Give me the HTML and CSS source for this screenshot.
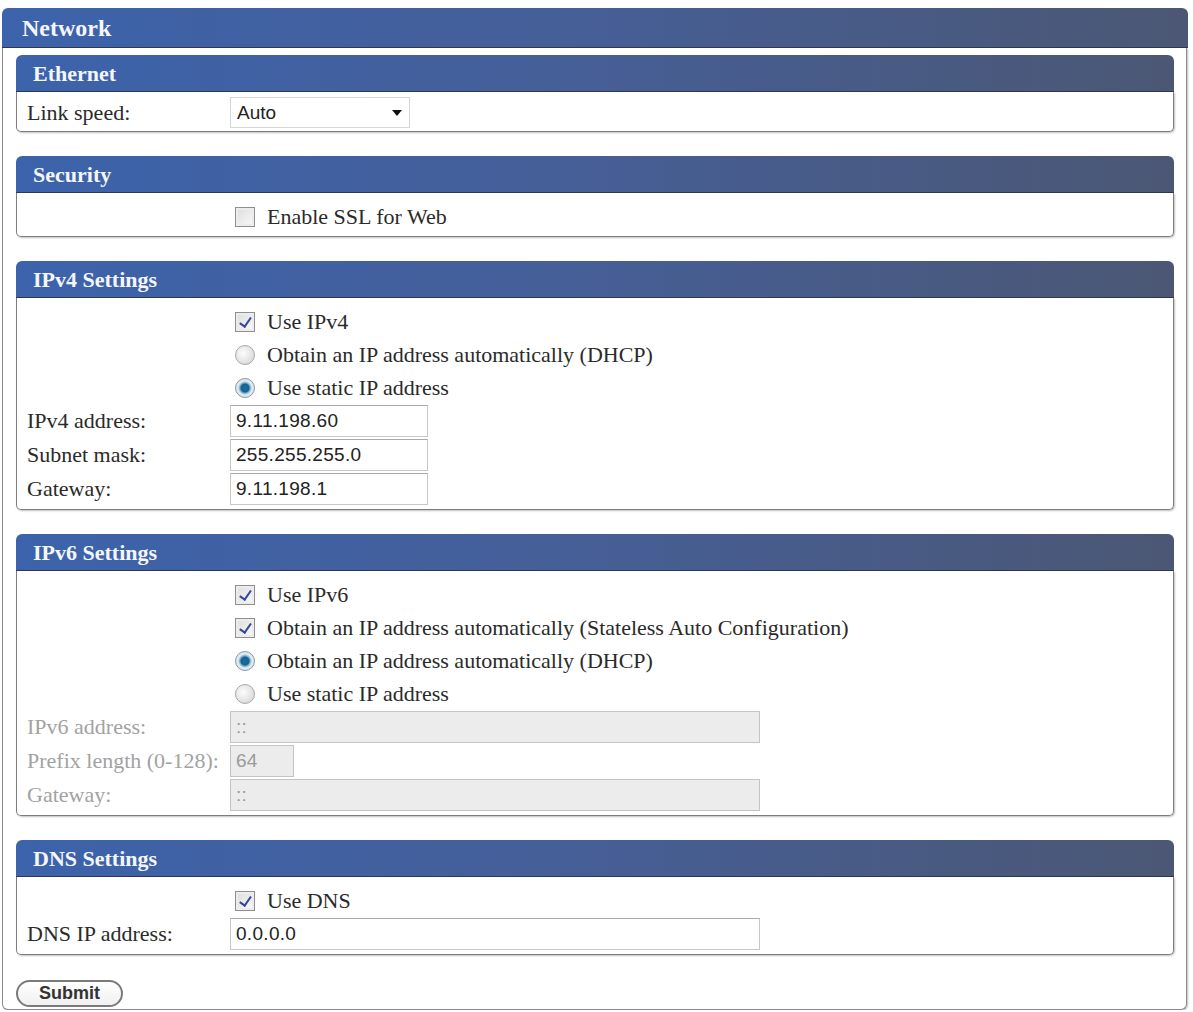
FILE: index.html
```html
<!DOCTYPE html>
<html lang="en">
<head>
    <meta charset="UTF-8">
    <title>Network</title>
    <link rel="stylesheet" href="styles.css">
</head>
<body>
    <div class="panel">
        <div class="panel-title">Network</div>
        <form class="panel-body" onsubmit="return false;">

            <div class="section">
                <div class="section-title">Ethernet</div>
                <div class="section-body compact">
                    <div class="row">
                        <label class="label">Link speed:</label>
                        <span class="select-wrap">
                            <select class="select">
                                <option>Auto</option>
                                <option>10 Mbps</option>
                                <option>100 Mbps</option>
                                <option>1 Gbps</option>
                            </select>
                        </span>
                    </div>
                </div>
            </div>

            <div class="section">
                <div class="section-title">Security</div>
                <div class="section-body">
                    <div class="row">
                        <span class="label"></span>
                        <label class="option"><input type="checkbox" class="check"> Enable SSL for Web</label>
                    </div>
                </div>
            </div>

            <div class="section">
                <div class="section-title">IPv4 Settings</div>
                <div class="section-body">
                    <div class="row">
                        <span class="label"></span>
                        <label class="option"><input type="checkbox" class="check" checked> Use IPv4</label>
                    </div>
                    <div class="row">
                        <span class="label"></span>
                        <label class="option"><input type="radio" name="v4" class="radio"> Obtain an IP address automatically (DHCP)</label>
                    </div>
                    <div class="row">
                        <span class="label"></span>
                        <label class="option"><input type="radio" name="v4" class="radio" checked> Use static IP address</label>
                    </div>
                    <div class="row field">
                        <label class="label">IPv4 address:</label>
                        <input type="text" class="text short" value="9.11.198.60">
                    </div>
                    <div class="row field">
                        <label class="label">Subnet mask:</label>
                        <input type="text" class="text short" value="255.255.255.0">
                    </div>
                    <div class="row field">
                        <label class="label">Gateway:</label>
                        <input type="text" class="text short" value="9.11.198.1">
                    </div>
                </div>
            </div>

            <div class="section">
                <div class="section-title">IPv6 Settings</div>
                <div class="section-body">
                    <div class="row">
                        <span class="label"></span>
                        <label class="option"><input type="checkbox" class="check" checked> Use IPv6</label>
                    </div>
                    <div class="row">
                        <span class="label"></span>
                        <label class="option"><input type="checkbox" class="check" checked> Obtain an IP address automatically (Stateless Auto Configuration)</label>
                    </div>
                    <div class="row">
                        <span class="label"></span>
                        <label class="option"><input type="radio" name="v6" class="radio" checked> Obtain an IP address automatically (DHCP)</label>
                    </div>
                    <div class="row">
                        <span class="label"></span>
                        <label class="option"><input type="radio" name="v6" class="radio"> Use static IP address</label>
                    </div>
                    <div class="row field disabled">
                        <label class="label">IPv6 address:</label>
                        <input type="text" class="text long" value="::" disabled>
                    </div>
                    <div class="row field disabled">
                        <label class="label">Prefix length (0-128):</label>
                        <input type="text" class="text tiny" value="64" disabled>
                    </div>
                    <div class="row field disabled">
                        <label class="label">Gateway:</label>
                        <input type="text" class="text long" value="::" disabled>
                    </div>
                </div>
            </div>

            <div class="section">
                <div class="section-title">DNS Settings</div>
                <div class="section-body">
                    <div class="row">
                        <span class="label"></span>
                        <label class="option"><input type="checkbox" class="check" checked> Use DNS</label>
                    </div>
                    <div class="row field">
                        <label class="label">DNS IP address:</label>
                        <input type="text" class="text long" value="0.0.0.0">
                    </div>
                </div>
            </div>

            <button type="submit" class="submit">Submit</button>
        </form>
    </div>
</body>
</html>
```

FILE: styles.css
```css
body {
    margin: 0;
    padding: 8px 5px 0 2px;
    background: #ffffff;
    font-family: "Liberation Serif", "Times New Roman", serif;
    font-size: 22px;
    color: #2a2a2a;
}
.panel-title,
.section-title {
    background: linear-gradient(to right, #3c63ab 0%, #455f99 45%, #4b5774 100%);
    color: #f4f6fb;
    font-weight: bold;
    border-radius: 6px 6px 0 0;
    border-bottom: 1px solid #2e3850;
}
.panel-title {
    font-size: 24px;
    height: 39px;
    line-height: 40px;
    padding-left: 20px;
}
.panel-body {
    margin: 0 1px 0 0;
    border: 1px solid #8a8a8a;
    border-top: none;
    border-radius: 0 0 6px 6px;
    box-shadow: 1px 1px 2px rgba(0,0,0,0.25);
    padding: 7px 12px 5px 13px;
    height: 962px;
    box-sizing: border-box;
}
.section {
    margin-bottom: 24px;
}
.section-title {
    font-size: 22px;
    height: 36px;
    line-height: 38px;
    padding-left: 17px;
}
.section-body {
    border: 1px solid #7d7d7d;
    border-top: none;
    border-radius: 0 0 5px 5px;
    box-shadow: 1px 1px 2px rgba(0,0,0,0.25);
    padding: 7px 10px 3px 10px;
}
.section-body.compact {
    padding-top: 4px;
    padding-bottom: 2px;
}
.row {
    display: grid;
    grid-template-columns: 203px 1fr;
    align-items: center;
    min-height: 33px;
}
.row.field {
    min-height: 34px;
}
.label {
    white-space: nowrap;
}
.disabled .label {
    color: #a2a2a2;
}
.option {
    display: flex;
    align-items: center;
    padding-left: 5px;
    white-space: nowrap;
}
.check,
.radio {
    appearance: none;
    -webkit-appearance: none;
    width: 20px;
    height: 20px;
    margin: 0 12px 0 0;
    box-sizing: border-box;
    flex: none;
    position: relative;
}
.check {
    border: 1px solid #8e8f8f;
    background: linear-gradient(135deg, #dcdcdc, #fafafa);
    box-shadow: inset 0 0 0 2px #ececec;
}
.check:checked::after {
    content: "";
    position: absolute;
    left: 6px;
    top: 2px;
    width: 5px;
    height: 10px;
    border: solid #34479a;
    border-width: 0 2.5px 2.5px 0;
    transform: rotate(35deg);
}
.radio {
    border-radius: 50%;
    border: 1px solid #a8a8a8;
    background: radial-gradient(circle at 40% 40%, #fdfdfd, #d0d0d0);
}
.radio:checked {
    border-color: #8a9aa8;
    background: radial-gradient(circle at 50% 50%, #1a6fa0 0, #15638f 4px, #6fa6c6 5px, #e4ecf1 7px, #d8dfe4 10px);
}
.text {
    font-family: "Liberation Sans", Arial, sans-serif;
    font-size: 19px;
    letter-spacing: 0.3px;
    color: #222;
    height: 32px;
    box-sizing: border-box;
    border: 1px solid #c8c8c8;
    border-top-color: #a9a9a9;
    padding: 0 5px;
    margin: 1px 0;
    background: #fff;
}
.text:disabled {
    background: #ececec;
    color: #9a9a9a;
    border-color: #c4c4c4;
}
.short {
    width: 198px;
}
.long {
    width: 530px;
}
.tiny {
    width: 64px;
}
.select-wrap {
    position: relative;
    width: 180px;
    display: block;
}
.select-wrap::after {
    content: "";
    position: absolute;
    right: 8px;
    top: 13px;
    border: 5px solid transparent;
    border-top: 6px solid #111;
    border-bottom: none;
    pointer-events: none;
}
.select {
    appearance: none;
    -webkit-appearance: none;
    width: 100%;
    height: 31px;
    font-family: "Liberation Sans", Arial, sans-serif;
    font-size: 19px;
    color: #222;
    border: 1px solid #d6d6d6;
    background: #fff;
    padding: 0 6px;
    border-radius: 0;
}
.submit {
    font-family: "Liberation Sans", Arial, sans-serif;
    font-weight: bold;
    font-size: 18px;
    color: #333;
    background: linear-gradient(#ffffff, #f0f0f0);
    border: 2px solid #7a7a7a;
    border-radius: 14px;
    width: 107px;
    height: 27px;
    padding: 0;
    margin-top: 1px;
    cursor: pointer;
}
```
